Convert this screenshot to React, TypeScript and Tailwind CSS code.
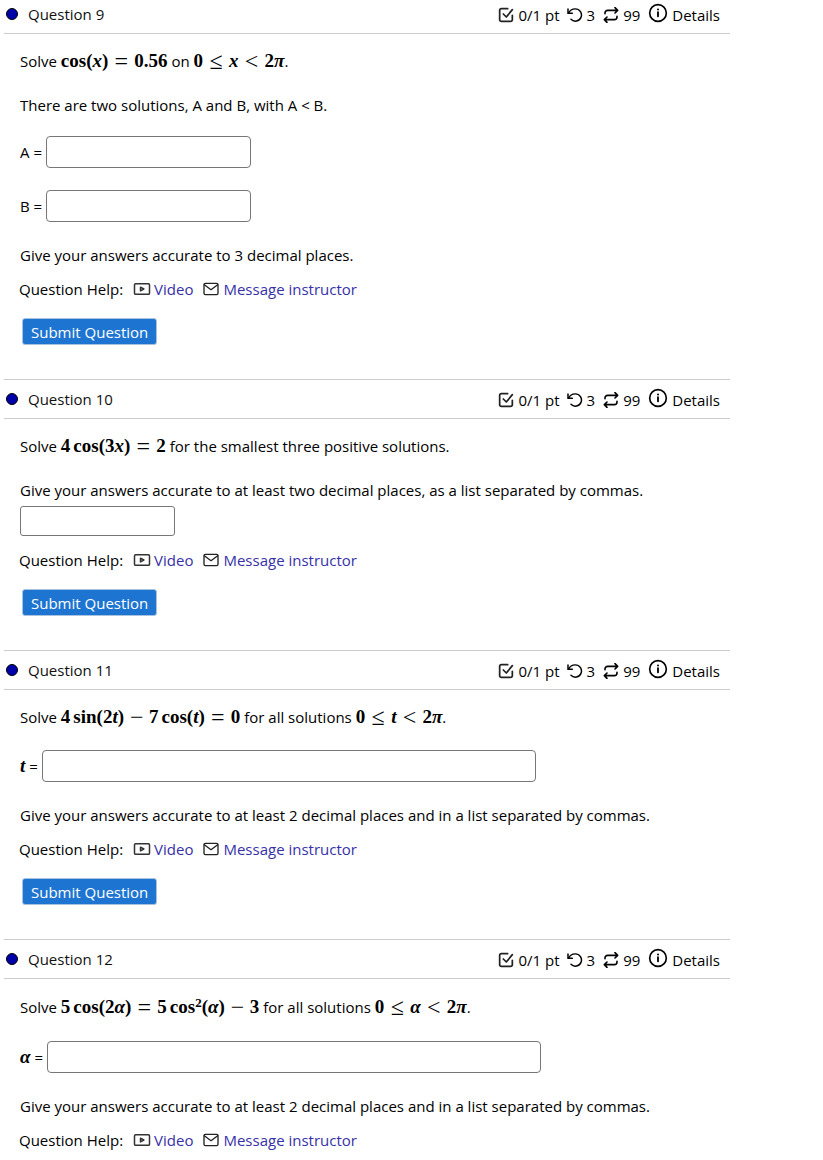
import type { ReactNode } from 'react';

function Icon({ children, className }: { children: ReactNode; className: string }) {
  return (
    <svg
      aria-hidden="true"
      viewBox="0 0 24 24"
      fill="none"
      stroke="currentColor"
      strokeWidth="2"
      strokeLinecap="round"
      strokeLinejoin="round"
      className={className}
    >
      {children}
    </svg>
  );
}

function Status() {
  return (
    <div className="flex items-center pt-[2px] text-black">
      <Icon className="mr-1 size-4 text-[#222]">
        <path d="M14.5 2.5H5A2.5 2.5 0 0 0 2.5 5v14A2.5 2.5 0 0 0 5 21.5h14a2.5 2.5 0 0 0 2.5-2.5v-6.5" strokeWidth="2.6" />
        <path d="m8 10.5 4.5 4.5L21.5 4" strokeWidth="2.6" />
      </Icon>
      <span className="mr-[7px]">0/1 pt</span>
      <Icon className="mr-1 size-4">
        <path d="M1.5 3v6.5H8" strokeWidth="2.2" />
        <path d="M2 9.5C4 5.5 8 2.800 12.500 2.800a9.200 9.200 0 1 1-6.500 15.700" strokeWidth="2.2" />
      </Icon>
      <span className="mr-2">3</span>
      <Icon className="mr-1 size-4">
        <path d="m18 1 4 4-4 4M3 10V9a4 4 0 0 1 4-4h15M6 23l-4-4 4-4M21 14v1a4 4 0 0 1-4 4H2" strokeWidth="2.4" />
      </Icon>
      <span className="mr-2">99</span>
      <button type="button" className="flex items-center gap-1">
        <Icon className="mb-1 size-5">
          <circle cx="12" cy="12" r="10" />
          <path d="M12 11v5" strokeWidth="2.2" />
          <path d="M12 7.7v.1" strokeWidth="2.4" />
        </Icon>
        Details
      </button>
    </div>
  );
}

function M({ children }: { children: ReactNode }) {
  return <span className="font-['Liberation_Serif',serif] text-[19px] leading-none font-bold whitespace-nowrap">{children}</span>;
}

function Rel({ children }: { children: ReactNode }) {
  return <span className="mx-[6px] inline-block w-[14px] text-center align-[-2px] text-[24px] leading-[16px] font-normal">{children}</span>;
}

function Minus() {
  return <span className="mx-[6px] inline-block w-[13px] text-center align-[-2px] text-[24px] leading-[16px] font-normal">−</span>;
}

function Fn({ children }: { children: ReactNode }) {
  return <span className="ml-[3px]">{children}</span>;
}

function V({ children }: { children: ReactNode }) {
  return <i>{children}</i>;
}

function Answer({ id, label, wide }: { id: string; label: ReactNode; wide?: boolean }) {
  return (
    <div className="mb-[22px] flex items-center gap-1">
      <label htmlFor={id} className="whitespace-nowrap">
        {label} =
      </label>
      <input
        id={id}
        type="text"
        className={`h-8 min-w-0 rounded-[4px] border border-[#777] px-2 ${wide ? 'w-[494px]' : 'w-[205px]'}`}
      />
    </div>
  );
}

function Help() {
  return (
    <div className="-ml-px flex items-center">
      <span className="mr-[10px]">Question Help:</span>
      <Icon className="mr-[3px] h-[18px] w-[18px] text-[#333]">
        <rect x="2" y="5" width="20" height="14" rx="1.5" />
        <path d="m10 9.500 4.500 2.500-4.500 2.500z" />
      </Icon>
      <a href="#video" className="mr-[10px] text-[#3631a8]">Video</a>
      <Icon className="mr-1 size-4 text-[#222]">
        <rect x="1.5" y="3.5" width="21" height="17" rx="2" />
        <path d="m2 5.5 10 7.5 10-7.5" />
      </Icon>
      <a href="#message" className="text-[#3631a8]">Message instructor</a>
    </div>
  );
}

function Question({ number, submit = true, children }: { number: number; submit?: boolean; children: ReactNode }) {
  return (
    <section className="border-t border-[#ccc] first:-mt-[5px] first:border-t-0">
      <header className="flex h-[39px] items-center justify-between border-b border-[#ccc] pr-[10px] pl-[2px] text-[#111]">
        <h2 className="flex items-center gap-[10px]">
          <span className="size-3 rounded-full border border-black bg-[#0000aa]" />
          Question {number}
        </h2>
        <Status />
      </header>
      <div className="pt-4 pb-[34px] pl-4">
        {children}
        <Help />
        {submit && (
          <button
            type="button"
            className="mt-[18px] ml-[2px] block h-[27px] rounded-[3px] border border-[#a9c3de] bg-[#1e74d1] px-2 text-white"
          >
            Submit Question
          </button>
        )}
      </div>
    </section>
  );
}

export default function App() {
  return (
    <main className="max-w-[734px] overflow-hidden bg-white px-1 font-['Open_Sans',sans-serif] text-[15px] leading-[22px] text-black">
      <Question number={9}>
        <p className="mb-[22px]">
          Solve <M>cos(<V>x</V>)<Rel>=</Rel>0.56</M> on <M>0<Rel>≤</Rel><V>x</V><Rel>&lt;</Rel>2<V>π</V></M>.
        </p>
        <p className="mb-5">There are two solutions, A and B, with A &lt; B.</p>
        <Answer id="q9a" label="A" />
        <Answer id="q9b" label="B" />
        <p className="mb-3">Give your answers accurate to 3 decimal places.</p>
      </Question>
      <Question number={10}>
        <p className="mb-[22px]">
          Solve <M>4<Fn>cos(3</Fn><V>x</V>)<Rel>=</Rel>2</M> for the smallest three positive solutions.
        </p>
        <label htmlFor="q10" className="mb-[5px] block">
          Give your answers accurate to at least two decimal places, as a list separated by commas.
        </label>
        <input id="q10" type="text" className="mb-[13px] block h-[30px] w-[155px] rounded-[3px] border border-[#777] px-2" />
      </Question>
      <Question number={11}>
        <p className="mb-[22px]">
          Solve <M>4<Fn>sin(2</Fn><V>t</V>)<Minus />7<Fn>cos(</Fn><V>t</V>)<Rel>=</Rel>0</M> for all solutions{' '}
          <M>0<Rel>≤</Rel><V>t</V><Rel>&lt;</Rel>2<V>π</V></M>.
        </p>
        <Answer id="q11" label={<M><V>t</V></M>} wide />
        <p className="mb-3">Give your answers accurate to at least 2 decimal places and in a list separated by commas.</p>
      </Question>
      <Question number={12} submit={false}>
        <p className="mb-[22px] leading-6">
          Solve <M>5<Fn>cos(2</Fn><V>α</V>)<Rel>=</Rel>5<Fn>cos</Fn><sup className="text-[13px]">2</sup>(<V>α</V>)<Minus />3</M> for all solutions{' '}
          <M>0<Rel>≤</Rel><V>α</V><Rel>&lt;</Rel>2<V>π</V></M>.
        </p>
        <Answer id="q12" label={<M><V>α</V></M>} wide />
        <p className="mb-3">Give your answers accurate to at least 2 decimal places and in a list separated by commas.</p>
      </Question>
    </main>
  );
}
